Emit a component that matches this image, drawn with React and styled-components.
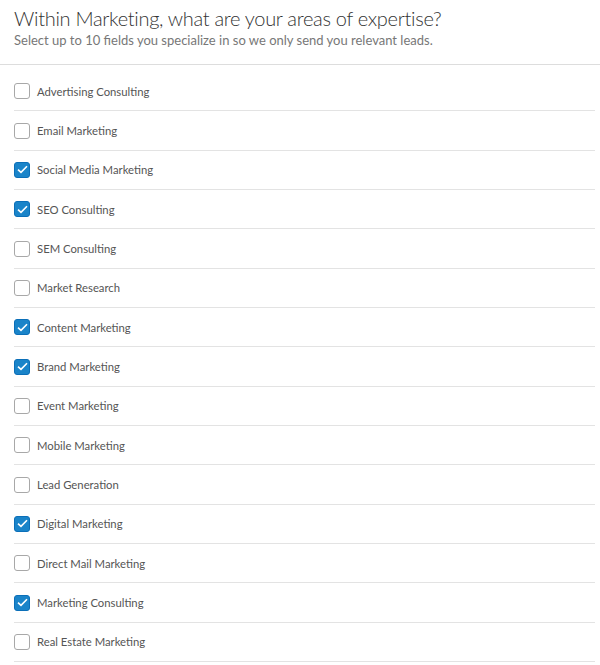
import React, { useState } from 'react';
import styled, { createGlobalStyle } from 'styled-components';

const GlobalStyle = createGlobalStyle`
  body {
    margin: 0;
    background: #fff;
    font-family: Lato, "Open Sans", sans-serif;
  }
`;

const Page = styled.div`
  width: 600px;
`;

const Header = styled.header`
  padding: 5px 14px 0;
  height: 59px;
  border-bottom: 1px solid #ddd;
`;

const Title = styled.h1`
  margin: 0;
  font-size: 20px;
  font-weight: 300;
  letter-spacing: -0.3px;
  color: #333;
  line-height: 26px;
`;

const Subtitle = styled.p`
  margin: 0;
  font-size: 13px;
  color: #777;
  line-height: 18px;
`;

const List = styled.ul`
  list-style: none;
  margin: 0;
  padding: 7px 5px 0 14px;
`;

const Row = styled.li`
  display: flex;
  align-items: center;
  gap: 7px;
  height: 38.35px;
  border-bottom: 1px solid #e3e3e3;
  cursor: pointer;
`;

const Box = styled.span`
  width: 16px;
  height: 16px;
  box-sizing: border-box;
  border-radius: 3px;
  border: 1px solid ${({ $checked }) => ($checked ? '#0b6fb8' : '#a8a8a8')};
  background: ${({ $checked }) => ($checked ? '#1a84c9' : '#fff')};
  display: flex;
  align-items: center;
  justify-content: center;
  flex-shrink: 0;
`;

const Label = styled.span`
  font-size: 11.3px;
  color: #555;
`;

const fields = [
  ['Advertising Consulting', false],
  ['Email Marketing', false],
  ['Social Media Marketing', true],
  ['SEO Consulting', true],
  ['SEM Consulting', false],
  ['Market Research', false],
  ['Content Marketing', true],
  ['Brand Marketing', true],
  ['Event Marketing', false],
  ['Mobile Marketing', false],
  ['Lead Generation', false],
  ['Digital Marketing', true],
  ['Direct Mail Marketing', false],
  ['Marketing Consulting', true],
  ['Real Estate Marketing', false],
];

export default function App() {
  const [checked, setChecked] = useState(fields.map(([, c]) => c));
  const toggle = (i) => setChecked((prev) => prev.map((c, j) => (j === i ? !c : c)));

  return (
    <Page>
      <GlobalStyle />
      <Header>
        <Title>Within Marketing, what are your areas of expertise?</Title>
        <Subtitle>Select up to 10 fields you specialize in so we only send you relevant leads.</Subtitle>
      </Header>
      <List>
        {fields.map(([name], i) => (
          <Row key={name} onClick={() => toggle(i)}>
            <Box $checked={checked[i]}>
              {checked[i] && (
                <svg width="11" height="9" viewBox="0 0 11 9">
                  <path d="M1 4.6 L4 7.4 L10 1.2" fill="none" stroke="#fff" strokeWidth="1.6" />
                </svg>
              )}
            </Box>
            <Label>{name}</Label>
          </Row>
        ))}
      </List>
    </Page>
  );
}
